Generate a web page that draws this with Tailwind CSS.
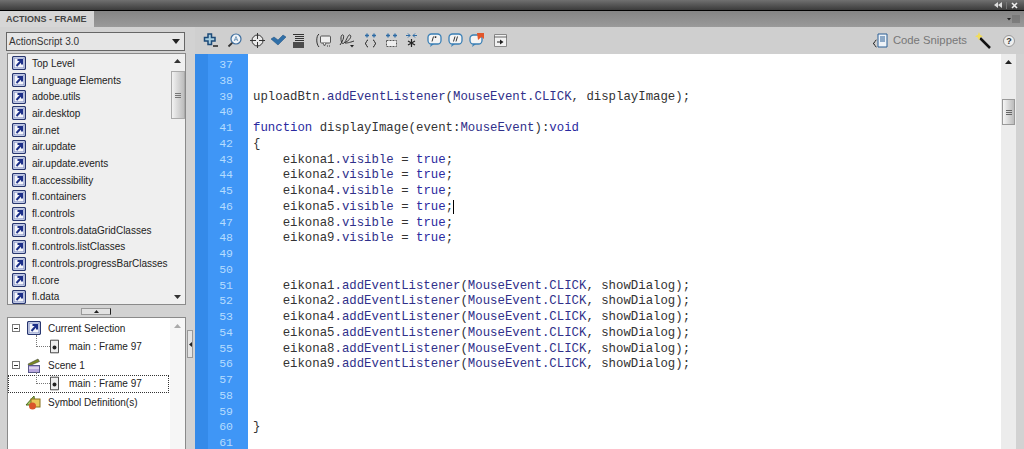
<!DOCTYPE html>
<html lang="en">
<head>
<meta charset="UTF-8" />
<title>Actions - Frame</title>
<script src="https://cdn.jsdelivr.net/npm/@tailwindcss/browser@4"></script>
</head>
<body class="w-[1024px] h-[449px] overflow-hidden bg-[#d2d2d2] font-['Liberation_Sans',sans-serif] text-[#333]">
<svg class="hidden">
  <symbol id="arrow" viewBox="0 0 14 14">
    <rect x="0.5" y="0.5" width="13" height="13" rx="1.5" fill="#c9d2ea" stroke="#28366f" stroke-width="1.200"/>
    <rect x="2.200" y="2.200" width="9.600" height="9.600" fill="#f5f6fb" stroke="#7f8cc0" stroke-width="0.600"/>
    <path d="M4.500 10 L9.500 4.500 M5.500 4 H10 V8.500" fill="none" stroke="#1c2f88" stroke-width="2"/>
  </symbol>
  <symbol id="frame" viewBox="0 0 10 15">
    <path d="M0.500 0.500H9.500V14.500H0.500Z" fill="#eee" stroke="#333"/>
    <circle cx="5" cy="8.500" r="2.200" fill="#222"/>
  </symbol>
</svg>

<!-- top strip -->
<div class="h-[10px] bg-gradient-to-b from-[#707070] to-[#3c3c3c] flex justify-end items-center pr-[6px] gap-[4px]">
  <svg width="8" height="6" viewBox="0 0 8 6"><path d="M4 0v6L0 3zM8 0v6L4 3z" fill="#ddd"/></svg>
  <i class="w-[1px] h-[7px] bg-[#777]"></i>
  <svg width="7" height="7" viewBox="0 0 7 7"><path d="M1 1L6 6M6 1L1 6" stroke="#eee" stroke-width="1.600"/></svg>
</div>
<div class="h-[1px] bg-black"></div>

<!-- tab row -->
<div class="h-[16px] bg-gradient-to-b from-[#858585] to-[#9a9a9a] flex justify-between">
  <div class="w-[94px] bg-[#d6d6d6] pl-[6px] text-[9px] leading-[16px] font-bold text-[#444] whitespace-nowrap">ACTIONS - FRAME</div>
  <svg class="mt-[4px] mr-[4px]" width="13" height="8" viewBox="0 0 13 8"><path d="M0 3h4L2 5.500z" fill="#222"/><path d="M5 1h8M5 3h8M5 5h8M5 7h8" stroke="#666"/></svg>
</div>

<div class="flex h-[422px]">
  <!-- left side -->
  <div class="w-[186px] shrink-0 pl-[6px] flex flex-col">
    <div class="mt-[5px] h-[19px] w-[179px] border border-[#666] bg-[#e6e6e6] flex items-center justify-between pl-[2px] pr-[4px] text-[10px]">
      <span>ActionScript 3.0</span>
      <svg width="8" height="5" viewBox="0 0 8 5"><path d="M0 0h8L4 5z" fill="#222"/></svg>
    </div>
    <div class="mt-[2px] h-[252px] w-[179px] ml-[1px] border border-[#8a8a8a] bg-[#efefef] flex overflow-hidden">
      <ul class="flex-1 pt-[1px] text-[10px] text-[#222]">
        <li class="flex items-center gap-[6px] pl-[4px] h-[16.700px]"><svg class="w-[14px] h-[14px]"><use href="#arrow"/></svg>Top Level</li>
        <li class="flex items-center gap-[6px] pl-[4px] h-[16.700px]"><svg class="w-[14px] h-[14px]"><use href="#arrow"/></svg>Language Elements</li>
        <li class="flex items-center gap-[6px] pl-[4px] h-[16.700px]"><svg class="w-[14px] h-[14px]"><use href="#arrow"/></svg>adobe.utils</li>
        <li class="flex items-center gap-[6px] pl-[4px] h-[16.700px]"><svg class="w-[14px] h-[14px]"><use href="#arrow"/></svg>air.desktop</li>
        <li class="flex items-center gap-[6px] pl-[4px] h-[16.700px]"><svg class="w-[14px] h-[14px]"><use href="#arrow"/></svg>air.net</li>
        <li class="flex items-center gap-[6px] pl-[4px] h-[16.700px]"><svg class="w-[14px] h-[14px]"><use href="#arrow"/></svg>air.update</li>
        <li class="flex items-center gap-[6px] pl-[4px] h-[16.700px]"><svg class="w-[14px] h-[14px]"><use href="#arrow"/></svg>air.update.events</li>
        <li class="flex items-center gap-[6px] pl-[4px] h-[16.700px]"><svg class="w-[14px] h-[14px]"><use href="#arrow"/></svg>fl.accessibility</li>
        <li class="flex items-center gap-[6px] pl-[4px] h-[16.700px]"><svg class="w-[14px] h-[14px]"><use href="#arrow"/></svg>fl.containers</li>
        <li class="flex items-center gap-[6px] pl-[4px] h-[16.700px]"><svg class="w-[14px] h-[14px]"><use href="#arrow"/></svg>fl.controls</li>
        <li class="flex items-center gap-[6px] pl-[4px] h-[16.700px]"><svg class="w-[14px] h-[14px]"><use href="#arrow"/></svg>fl.controls.dataGridClasses</li>
        <li class="flex items-center gap-[6px] pl-[4px] h-[16.700px]"><svg class="w-[14px] h-[14px]"><use href="#arrow"/></svg>fl.controls.listClasses</li>
        <li class="flex items-center gap-[6px] pl-[4px] h-[16.700px]"><svg class="w-[14px] h-[14px]"><use href="#arrow"/></svg>fl.controls.progressBarClasses</li>
        <li class="flex items-center gap-[6px] pl-[4px] h-[16.700px]"><svg class="w-[14px] h-[14px]"><use href="#arrow"/></svg>fl.core</li>
        <li class="flex items-center gap-[6px] pl-[4px] h-[16.700px]"><svg class="w-[14px] h-[14px]"><use href="#arrow"/></svg>fl.data</li>
      </ul>
      <!-- list scrollbar -->
      <div class="w-[15px] bg-[#f0f0f0] flex flex-col items-center">
        <svg class="mt-[5px]" width="7" height="4" viewBox="0 0 7 4"><path d="M0 4h7L3.500 0z" fill="#333"/></svg>
        <div class="mt-[8px] w-[14px] h-[48px] border border-[#aaa] bg-gradient-to-r from-[#f2f2f2] to-[#bdbdbd] flex flex-col justify-center items-center gap-[1px]">
          <i class="w-[6px] h-[1px] bg-[#777]"></i><i class="w-[6px] h-[1px] bg-[#777]"></i><i class="w-[6px] h-[1px] bg-[#777]"></i>
        </div>
        <svg class="mt-auto mb-[5px]" width="7" height="4" viewBox="0 0 7 4"><path d="M0 0h7L3.500 4z" fill="#333"/></svg>
      </div>
    </div>
    <!-- splitter -->
    <div class="h-[12px] flex items-center justify-center">
      <div class="w-[30px] h-[7px] bg-[#e2e2e2] border border-[#999] border-r-[#222] flex items-center justify-center">
        <svg width="5" height="3" viewBox="0 0 5 3"><path d="M0 3h5L2.500 0z" fill="#222"/></svg>
      </div>
    </div>
    <!-- tree -->
    <div class="flex-1 w-[179px] ml-[1px] border border-b-0 border-[#8a8a8a] bg-white flex text-[10px] text-[#222] overflow-hidden">
      <div class="flex-1 pt-[1px]">
        <div class="flex items-center h-[18.500px] pl-[4px]">
          <span class="w-[8px] h-[8px] border border-[#777] flex items-center justify-center"><i class="w-[4px] h-[1px] bg-[#333]"></i></span>
          <svg class="ml-[7px] w-[14px] h-[14px]"><use href="#arrow"/></svg>
          <span class="ml-[7px]">Current Selection</span>
        </div>
        <div class="flex items-center h-[18.500px] pl-[28px]">
          <i class="w-[14px] h-[12px] -mt-[12px] border-l border-b border-dotted border-[#777]"></i>
          <svg class="w-[9px] h-[15px]"><use href="#frame"/></svg>
          <span class="ml-[10px]">main : Frame 97</span>
        </div>
        <div class="flex items-center h-[18.500px] pl-[4px]">
          <span class="w-[8px] h-[8px] border border-[#777] flex items-center justify-center"><i class="w-[4px] h-[1px] bg-[#333]"></i></span>
          <svg class="ml-[7px]" width="14" height="15" viewBox="0 0 14 15"><path d="M1 6 L11 1 L12.500 3.500 L2 8Z" fill="#7b8a24" stroke="#333" stroke-width="0.500"/><rect x="1.500" y="7.500" width="11" height="7" fill="#b7a6dd" stroke="#5a5a8a"/><path d="M2 10H12" stroke="#fff"/></svg>
          <span class="ml-[7px]">Scene 1</span>
        </div>
        <div class="flex items-center h-[18.500px] pl-[27px] w-[161px] border border-dotted border-[#333]">
          <i class="w-[14px] h-[12px] -mt-[12px] border-l border-b border-dotted border-[#777]"></i>
          <svg class="w-[9px] h-[15px]"><use href="#frame"/></svg>
          <span class="ml-[10px]">main : Frame 97</span>
        </div>
        <div class="flex items-center h-[18.500px] pl-[17px]">
          <svg width="16" height="15" viewBox="0 0 16 15"><path d="M1 10 L9 1 L10 10Z" fill="#a5c860" stroke="#4d6b1e"/><rect x="6" y="4" width="9" height="8" fill="#e8c65a" stroke="#86701f"/><circle cx="7.500" cy="11" r="3.500" fill="#d9532b"/></svg>
          <span class="ml-[7px]">Symbol Definition(s)</span>
        </div>
      </div>
      <div class="w-[15px] bg-[#f6f6f6] flex justify-center">
        <svg class="mt-[6px]" width="7" height="4" viewBox="0 0 7 4"><path d="M0 4h7L3.500 0z" fill="#aaa"/></svg>
      </div>
    </div>
  </div>

  <!-- collapse bar -->
  <div class="w-[9px] shrink-0 flex items-start">
    <div class="mt-[303px] ml-[1px] w-[6px] h-[28px] bg-[#e4e4e4] border border-[#999] flex items-center justify-center">
      <svg width="3" height="5" viewBox="0 0 3 5"><path d="M3 0v5L0 2.500z" fill="#222"/></svg>
    </div>
  </div>

  <!-- editor -->
  <div class="flex-1 flex flex-col min-w-0">
    <!-- toolbar -->
    <div class="h-[27px] shrink-0 flex items-center bg-[#cfcfcf]">
      <div class="flex items-center pl-[8px]">
        <svg class="w-[15px] h-[15px]" viewBox="0 0 15 15"><path d="M5 1h3.500v3.500H12V8H8.500v3.500H5V8H1.500V4.500H5z" fill="#a9cfe0" stroke="#1c4a78" stroke-width="1.500"/><path d="M10 13h5" stroke="#222" stroke-width="1.500"/></svg>
        <svg class="ml-[9px] w-[15px] h-[15px]" viewBox="0 0 15 15"><circle cx="9" cy="6" r="5" fill="#f0f4f8" stroke="#3f6f9f" stroke-width="1.200"/><path d="M7.200 8L9 3.500L10.800 8M7.800 6.700H10.200" fill="none" stroke="#5a86ad" stroke-width="0.800"/><path d="M5.200 9.800 L1.500 13.500" stroke="#333" stroke-width="1.800"/></svg>
        <svg class="ml-[8px] w-[15px] h-[15px]" viewBox="0 0 15 15"><circle cx="7.500" cy="7.500" r="5.500" fill="#e8e8e8" stroke="#333"/><path d="M7.500 0V6M7.500 9V15M0 7.500H6M9 7.500H15" stroke="#333"/></svg>
        <svg class="ml-[6px] w-[15px] h-[15px]" viewBox="0 0 15 15"><path d="M0 6 L3 4 L7 7 L12 2 L15 4 L7 12Z" fill="#2f6fa8" stroke="#1e4f7e" stroke-width="0.500"/></svg>
        <svg class="ml-[6px] w-[13px] h-[15px]" viewBox="0 0 13 15"><path d="M1 1.500H12M3 3.500H12M3 5.500H12M3 7.500H12" stroke="#333"/><path d="M1 10H12M1 12H12M1 14H12" stroke="#222" stroke-width="1.300"/></svg>
        <svg class="ml-[11px] w-[15px] h-[15px]" viewBox="0 0 15 15"><path d="M3 1C0 3 0 11 3 14" fill="none" stroke="#333"/><rect x="4.500" y="3" width="10" height="7" rx="1" fill="#eee" stroke="#555"/><path d="M7 10 L8.500 13 L10 10" fill="#eee" stroke="#555"/><path d="M11 13h3" stroke="#333" stroke-dasharray="1 1"/></svg>
        <svg class="ml-[8px] w-[16px] h-[15px]" viewBox="0 0 16 15"><path d="M1 12C6 5 5 1 3 2S2 13 5 10S9 1 11 2S11 7 7 9S10 10 15 8" fill="none" stroke="#333"/><path d="M11 12h4l-2 2.500z" fill="#222"/></svg>
        <svg class="ml-[9px] w-[13px] h-[15px]" viewBox="0 0 13 15"><path d="M4 7C2 7 3 10 1 10.500C3 11 2 14 4 14M9 7C11 7 10 10 12 10.500C10 11 11 14 9 14" fill="none" stroke="#222"/><path d="M3 0.500V4.500M1 2.500H5M10 0.500V4.500M8 2.500H12" stroke="#2d6ba5" stroke-width="1.300"/></svg>
        <svg class="ml-[8px] w-[13px] h-[15px]" viewBox="0 0 13 15"><rect x="1.500" y="7.500" width="10" height="6" fill="#eee" stroke="#555" stroke-dasharray="2 1"/><path d="M3 0.500V4.500M1 2.500H5M10 0.500V4.500M8 2.500H12" stroke="#2d6ba5" stroke-width="1.300"/></svg>
        <svg class="ml-[7px] w-[13px] h-[15px]" viewBox="0 0 13 15"><path d="M6.500 6V14M3 8L10 12M10 8L3 12" stroke="#222" stroke-width="1.200"/><path d="M1 2.500H5M3 0.500L5 2.500L3 4.500M12 2.500H8M10 0.500L8 2.500L10 4.500" fill="none" stroke="#2d6ba5"/></svg>
        <svg class="ml-[9px] w-[15px] h-[15px]" viewBox="0 0 15 15"><rect x="1" y="1" width="13" height="10" rx="3.500" fill="#f4f4f4" stroke="#3a7fb5" stroke-width="1.300"/><path d="M3 14L4 11H7Z" fill="#3a7fb5"/><path d="M6.500 3.500L5 8.500M8.500 3.500V5M7.500 4H9.500" stroke="#333"/></svg>
        <svg class="ml-[6px] w-[15px] h-[15px]" viewBox="0 0 15 15"><rect x="1" y="1" width="13" height="10" rx="3.500" fill="#f4f4f4" stroke="#3a7fb5" stroke-width="1.300"/><path d="M3 14L4 11H7Z" fill="#3a7fb5"/><path d="M7 3.500L5.500 8.500M9.500 3.500L8 8.500" stroke="#333"/></svg>
        <svg class="ml-[6px] w-[15px] h-[15px]" viewBox="0 0 15 15"><rect x="1" y="2" width="12" height="9" rx="3.500" fill="#f4f4f4" stroke="#3a7fb5" stroke-width="1.300"/><path d="M3 14L4 11H7Z" fill="#3a7fb5"/><path d="M8 0H15V6L12.500 4L9 7Z" fill="#e2562a"/></svg>
        <svg class="ml-[10px] w-[13px] h-[15px]" viewBox="0 0 13 15"><path d="M0.500 1.500H12.500V13.500H0.500Z" fill="#f2f2f2" stroke="#888"/><path d="M0 4H13" stroke="#666"/><path d="M3 9H8" stroke="#222"/><path d="M6 6.500L9.500 9L6 11.500Z" fill="#222"/></svg>
      </div>
      <div class="ml-auto flex items-center pr-[9px]">
        <svg class="w-[15px] h-[15px]" viewBox="0 0 15 15"><path d="M5 1H14V14H5Z" fill="#eef3f8" stroke="#2a5f95"/><path d="M7 4H12M7 6H12M7 8H12" stroke="#2a5f95"/><path d="M3.500 7C1.500 7 2.500 10 0 10.500C2.500 11 1.500 14 3.500 14" fill="none" stroke="#222"/></svg>
        <span class="ml-[5px] text-[11.300px] text-[#777]">Code Snippets</span>
        <svg class="ml-[8px] w-[16px] h-[17px]" viewBox="0 0 16 17"><path d="M5 6L15 16" stroke="#111" stroke-width="2.500"/><path d="M4 0L5.300 3L8 4.300L5.300 5.500L4 8.500L2.800 5.500L0 4.300L2.800 3Z" fill="#f1dc5a"/></svg>
        <span class="ml-[12px] w-[12px] h-[12px] rounded-full bg-[#eee] border border-[#999] text-[9px] leading-[10px] font-bold text-center text-[#333]">?</span>
      </div>
    </div>
    <div class="flex-1 flex min-h-0 pr-[8px]">
      <!-- line numbers -->
      <div class="w-[53px] shrink-0 bg-[#3f96f6] border-l-[13px] border-[#348ae9] pt-[3px] pr-[15px] text-right font-['Liberation_Mono',monospace] text-[11.500px] leading-[15.750px] text-[#b5dcff]">
        <div>37</div><div>38</div><div>39</div><div>40</div><div>41</div><div>42</div><div>43</div><div>44</div><div>45</div><div>46</div><div>47</div><div>48</div><div>49</div><div>50</div><div>51</div><div>52</div><div>53</div><div>54</div><div>55</div><div>56</div><div>57</div><div>58</div><div>59</div><div>60</div><div>61</div>
      </div>
      <!-- code -->
      <div class="flex-1 bg-white pt-[4px] pl-[5px] font-['Liberation_Mono',monospace] text-[12.350px] leading-[15.750px] text-[#333] overflow-hidden">
        <div class="h-[31.500px]"></div>
        <div class="whitespace-pre">uploadBtn<span class="text-[#30308a]">.addEventListener</span>(<span class="text-[#30308a]">MouseEvent.CLICK</span>, displayImage);</div>
        <div class="h-[15.750px]"></div>
        <div class="whitespace-pre"><span class="text-[#2a2aa0]">function</span> displayImage(event:<span class="text-[#30308a]">MouseEvent</span>):<span class="text-[#2a2aa0]">void</span></div>
        <div class="whitespace-pre">{</div>
        <div class="whitespace-pre">    eikona1<span class="text-[#30308a]">.visible</span> = <span class="text-[#2a2aa0]">true</span>;</div>
        <div class="whitespace-pre">    eikona2<span class="text-[#30308a]">.visible</span> = <span class="text-[#2a2aa0]">true</span>;</div>
        <div class="whitespace-pre">    eikona4<span class="text-[#30308a]">.visible</span> = <span class="text-[#2a2aa0]">true</span>;</div>
        <div class="whitespace-pre">    eikona5<span class="text-[#30308a]">.visible</span> = <span class="text-[#2a2aa0]">true</span>;<span class="border-l border-black"></span></div>
        <div class="whitespace-pre">    eikona8<span class="text-[#30308a]">.visible</span> = <span class="text-[#2a2aa0]">true</span>;</div>
        <div class="whitespace-pre">    eikona9<span class="text-[#30308a]">.visible</span> = <span class="text-[#2a2aa0]">true</span>;</div>
        <div class="h-[31.500px]"></div>
        <div class="whitespace-pre">    eikona1<span class="text-[#30308a]">.addEventListener</span>(<span class="text-[#30308a]">MouseEvent.CLICK</span>, showDialog);</div>
        <div class="whitespace-pre">    eikona2<span class="text-[#30308a]">.addEventListener</span>(<span class="text-[#30308a]">MouseEvent.CLICK</span>, showDialog);</div>
        <div class="whitespace-pre">    eikona4<span class="text-[#30308a]">.addEventListener</span>(<span class="text-[#30308a]">MouseEvent.CLICK</span>, showDialog);</div>
        <div class="whitespace-pre">    eikona5<span class="text-[#30308a]">.addEventListener</span>(<span class="text-[#30308a]">MouseEvent.CLICK</span>, showDialog);</div>
        <div class="whitespace-pre">    eikona8<span class="text-[#30308a]">.addEventListener</span>(<span class="text-[#30308a]">MouseEvent.CLICK</span>, showDialog);</div>
        <div class="whitespace-pre">    eikona9<span class="text-[#30308a]">.addEventListener</span>(<span class="text-[#30308a]">MouseEvent.CLICK</span>, showDialog);</div>
        <div class="h-[47.250px]"></div>
        <div class="whitespace-pre">}</div>
      </div>
      <!-- editor scrollbar -->
      <div class="w-[15px] shrink-0 bg-[#ececec] flex flex-col items-center">
        <svg class="mt-[6px]" width="7" height="4" viewBox="0 0 7 4"><path d="M0 4h7L3.500 0z" fill="#222"/></svg>
        <div class="mt-[35px] w-[13px] h-[26px] border border-[#999] bg-gradient-to-r from-[#f6f6f6] to-[#bbb] flex flex-col justify-center items-center gap-[1px]">
          <i class="w-[6px] h-[1px] bg-[#666]"></i><i class="w-[6px] h-[1px] bg-[#666]"></i><i class="w-[6px] h-[1px] bg-[#666]"></i>
        </div>
      </div>
    </div>
  </div>
</div>
</body>
</html>
